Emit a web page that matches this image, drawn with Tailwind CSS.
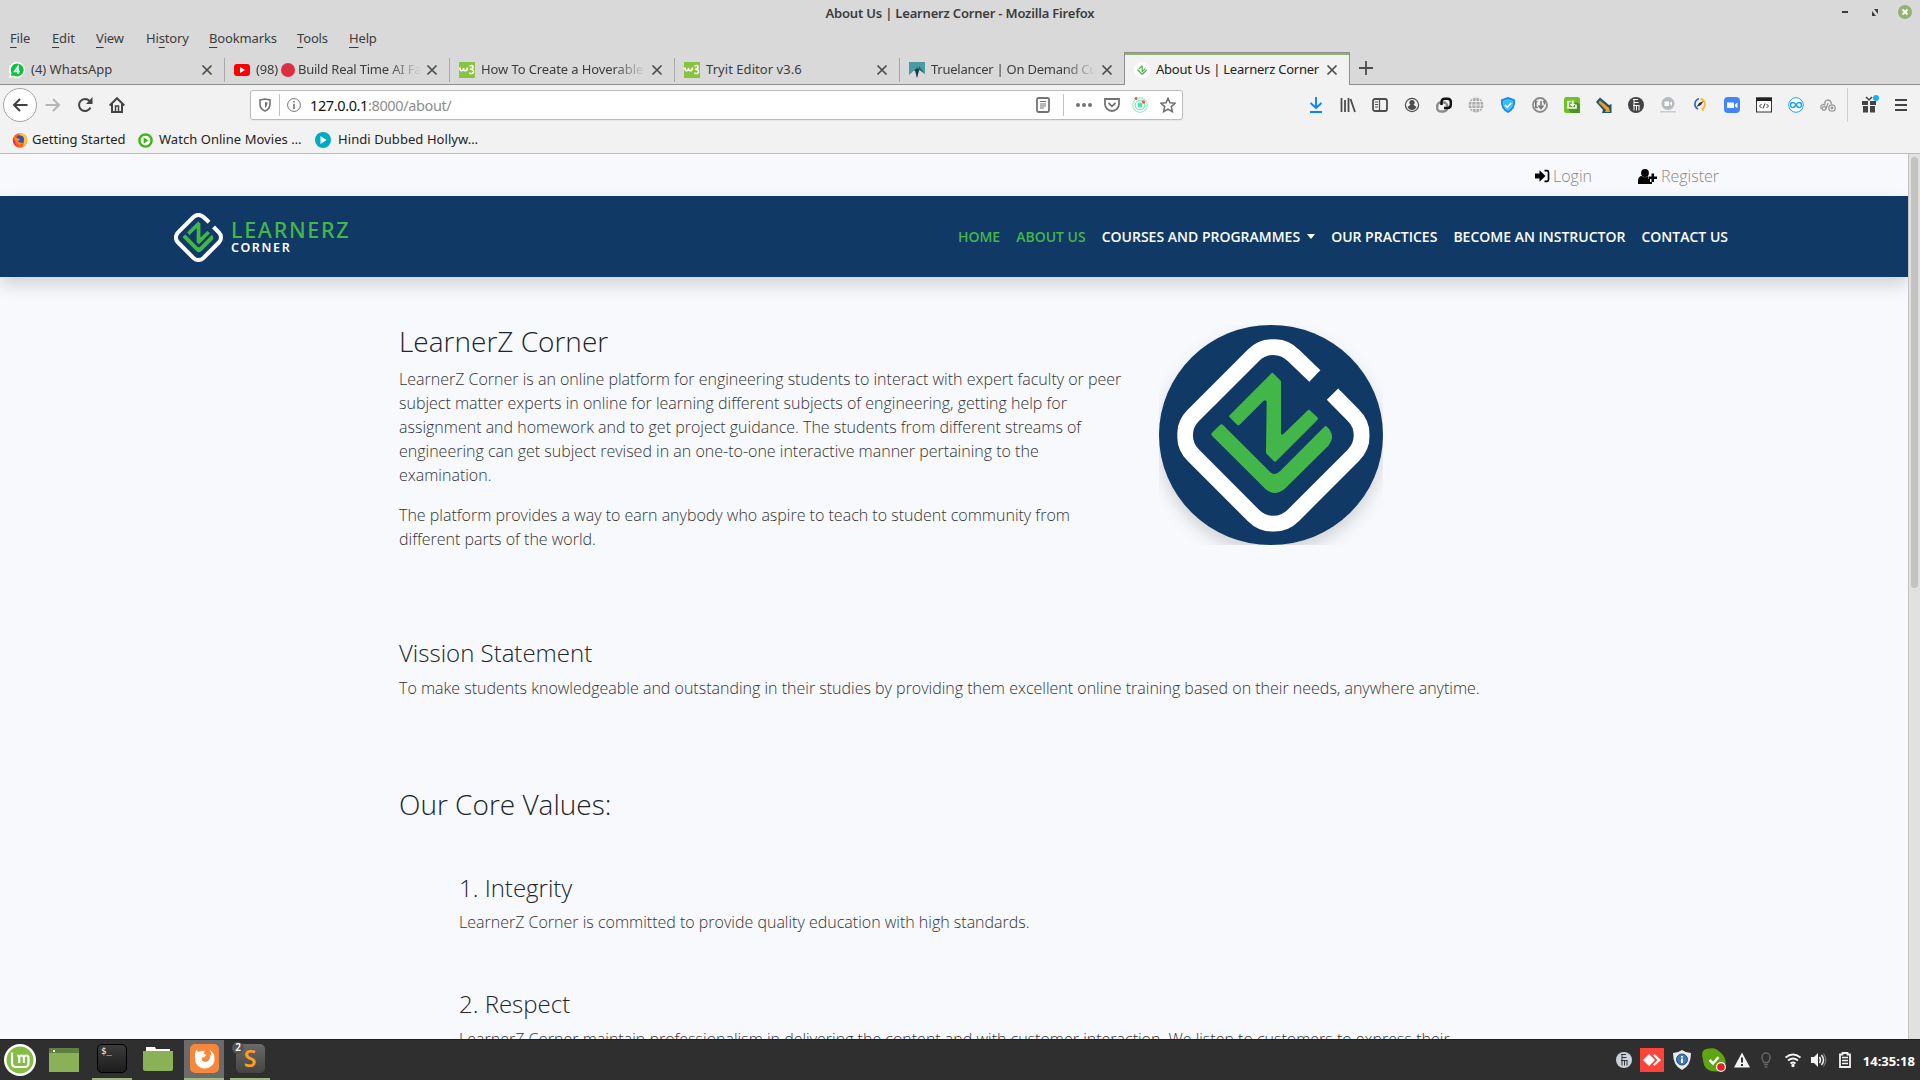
<!DOCTYPE html>
<html lang="en">
<head>
<meta charset="utf-8">
<title>About Us | Learnerz Corner</title>
<script src="https://cdn.jsdelivr.net/npm/@tailwindcss/browser@4"></script>
</head>
<body class="w-[1920px] h-[1080px] overflow-hidden bg-[#d9d9d9]">
<svg class="hidden">
  <symbol id="mark" viewBox="172 118 577 577">
    <path fill="none" stroke="#fff" stroke-width="48" d="M584.5 228L520 166A84 84 0 0 0 400 166L220 346A84 84 0 0 0 220 466L400 646A84 84 0 0 0 520 646L700 466A84 84 0 0 0 700 346L637.5 282.5"/>
    <path fill="#43b649" d="M329 346Q326 349 329 352L351 374Q355 378 359 374L430 303Q438 297 440 306L438 456Q438 460 441 463L461 483Q465 487 469 483L592 360Q596 356 592 352L571 332Q567 327 562 332L491 401Q483 408 483 399V246Q483 243 480 240L461 221Q457 216 453 221Z"/>
    <path fill="#43b649" d="M276 398Q272 402 276 407L437 568Q463 590 493 568L625 437Q643 413 632 395Q627 385 621 380Q617 376 613 380L480 514Q463 530 448 514L309 375Q304 370 300 375Z"/>
  </symbol>
  <symbol id="x" viewBox="0 0 12 12"><path d="M1.5 1.5l9 9M10.5 1.5l-9 9" stroke="#4d4d4d" stroke-width="1.7" fill="none"/></symbol>
  <symbol id="w3" viewBox="0 0 16 16"><path fill="#88c440" d="M0 0h16v16H0z"/><path fill="none" stroke="#fff" stroke-width="1.600" stroke-linejoin="round" d="M.8 5.500Q1 9 2.800 8.800 4.300 8.500 4.500 6.500 4.800 9 6.500 8.800 8.300 8.500 8.500 5.500M10.500 4.200Q14 2.500 14 5q0 2-2.500 2.300Q15 7.500 14.500 10q-.8 2.500-4.300 1"/></symbol>
</svg>

<div class="flex flex-col w-[1920px] h-[1080px] font-['Noto_Sans',sans-serif] text-[13px] text-[#3c3c3c]">
  <!-- Window title -->
  <header class="h-[26px] grid grid-cols-[1fr_auto_1fr] items-center shrink-0 pt-px">
    <span></span>
    <span class="font-semibold tracking-[-0.19px]">About Us | Learnerz Corner - Mozilla Firefox</span>
    <div class="flex justify-end items-center gap-4 pr-2 pb-1">
      <svg class="size-3.5" viewBox="0 0 14 14"><path d="M4 6h6v2H4z" fill="#3c3c3c"/></svg>
      <svg class="size-3.5" viewBox="0 0 14 14"><path d="M6 4h4v5zM4 6l4 5H4z" fill="#3c3c3c"/></svg>
      <svg class="size-3.5" viewBox="0 0 14 14"><circle cx="7" cy="7" r="7" fill="#92b372"/><path d="M4.500 4.500l5 5M9.500 4.500l-5 5" stroke="#fff" stroke-width="1.800"/></svg>
    </div>
  </header>
  <!-- Menu bar -->
  <nav class="h-[26px] shrink-0 flex items-center pl-2.5 tracking-[-0.15px] underline-offset-4">
    <span class="w-[42px]"><u>F</u>ile</span><span class="w-11"><u>E</u>dit</span><span class="w-[50px]"><u>V</u>iew</span><span class="w-[63px]">Hi<u>s</u>tory</span><span class="w-[88px]"><u>B</u>ookmarks</span><span class="w-[52px]"><u>T</u>ools</span><span><u>H</u>elp</span>
  </nav>
  <!-- Tabs -->
  <div class="h-[33px] shrink-0 flex tracking-[-0.1px]">
    <div class="flex items-center grow border-b border-[#8f8f8f] pt-[3px]">
      <div class="w-[225px] h-6 flex items-center border-r border-[#a9a9a9] pl-[9px] pr-[11px]">
        <svg class="size-4 mr-1.5 shrink-0" viewBox="0 0 16 16"><path fill="#fff" d="M8 0a8 8 0 1 1-4 15L0 16l1-4A8 8 0 0 1 8 0"/><path fill="#0dc143" d="M8.200 1.500a6.500 6.500 0 1 1-3.500 12L2 14l.5-3A6.500 6.500 0 0 1 8.200 1.500"/><path d="M9 12V4.500L5.500 9.500H11" stroke="#fff" stroke-width="1.500" fill="none"/></svg>
        <span class="grow tracking-normal">(4) WhatsApp</span><svg class="size-3"><use href="#x"/></svg>
      </div>
      <div class="w-[225px] h-6 flex items-center border-r border-[#a9a9a9] pl-[9px] pr-[11px]">
        <svg class="w-4 h-3 mr-1.5 shrink-0" viewBox="0 0 16 12"><rect width="16" height="12" rx="3" fill="#f00"/><path d="M6 3l5 3-5 3z" fill="#fff"/></svg>
        <span class="w-[166px] flex items-center overflow-hidden whitespace-nowrap mr-[5px] mask-r-from-80% tracking-[-0.2px]"><span>(98)</span><i class="size-[14px] rounded-full bg-[#dd2e44] mx-[3px] shrink-0"></i>Build Real Time AI Face</span><svg class="size-3 shrink-0"><use href="#x"/></svg>
      </div>
      <div class="w-[225px] h-6 flex items-center border-r border-[#a9a9a9] pl-[9px] pr-[11px]">
        <svg class="size-4 mr-1.5 shrink-0"><use href="#w3"/></svg>
        <span class="w-[166px] overflow-hidden whitespace-nowrap mr-[5px] mask-r-from-80%">How To Create a Hoverable</span><svg class="size-3 shrink-0"><use href="#x"/></svg>
      </div>
      <div class="w-[225px] h-6 flex items-center border-r border-[#a9a9a9] pl-[9px] pr-[11px]">
        <svg class="size-4 mr-1.5 shrink-0"><use href="#w3"/></svg>
        <span class="grow tracking-[0.05px]">Tryit Editor v3.6</span><svg class="size-3"><use href="#x"/></svg>
      </div>
      <div class="w-[224px] h-6 flex items-center pl-[9px] pr-[11px]">
        <svg class="size-4 mr-1.5 shrink-0" viewBox="0 0 16 16"><path fill="#4b9ba2" d="M0 0h16v12l-4-3-2-1-2 8-2-8-2 1-4 4z"/><path fill="#2b6066" d="M0 13L10 4l-4 5-2 0zM16 12L10 4l0 4 2 1z"/><path fill="#163b43" d="M6 8l3-2 1 2-2 8z"/></svg>
        <span class="w-[166px] overflow-hidden whitespace-nowrap mr-[5px] mask-r-from-80% tracking-[-0.25px]">Truelancer | On Demand Curated</span><svg class="size-3 shrink-0"><use href="#x"/></svg>
      </div>
    </div>
    <div class="w-[226px] border border-b-0 border-[#8f8f8f] bg-[#f2f2f2] text-[#222]">
      <div class="h-0.5 bg-[#8fb36a]"></div>
      <div class="flex items-center h-[31px] pl-[9px] pr-[11px] pb-px">
        <span class="size-4 rounded-full bg-white mr-1.5 shrink-0 flex items-center justify-center"><svg class="size-2.5" viewBox="270 215 370 370"><use href="#mark" x="172" y="118" width="577" height="577"/></svg></span>
        <span class="grow whitespace-nowrap tracking-[-0.24px]">About Us | Learnerz Corner</span><svg class="size-3 shrink-0"><use href="#x"/></svg>
      </div>
    </div>
    <div class="w-[570px] border-b border-[#8f8f8f] pl-[9px] pt-[9px]"><svg class="size-3.5" viewBox="0 0 14 14"><path d="M7 0v14M0 7h14" stroke="#4d4d4d" stroke-width="1.800"/></svg></div>
  </div>
  <!-- Navigation toolbar and bookmarks -->
  <div class="h-[69px] shrink-0 bg-[#f2f2f2] border-b border-[#bcbcbc]">
    <div class="h-10 flex items-center">
      <div class="w-[250px] flex items-center pl-[3px] gap-[15px]">
        <span class="size-[34px] rounded-full border border-[#a6a6a6] bg-white flex items-center justify-center"><svg class="size-4" viewBox="0 0 16 16"><path d="M15.500 8H2M8 2L2 8l6 6" fill="none" stroke="#3f3f3f" stroke-width="2"/></svg></span>
        <svg class="size-4 -ml-[7px]" viewBox="0 0 16 16"><path d="M.5 8H14M8 2l6 6-6 6" fill="none" stroke="#b5b5b5" stroke-width="2"/></svg>
        <svg class="size-4 ml-px" viewBox="0 0 16 16"><path d="M13.500 10.500A6 6 0 1 1 12.500 4" fill="none" stroke="#444" stroke-width="2"/><path d="M15.500 0v7H9z" fill="#444"/></svg>
        <svg class="size-4 ml-px" viewBox="0 0 16 16"><path d="M.7 8.500L8 1.200l7.300 7.300M3 7v8h10V7" fill="none" stroke="#444" stroke-width="2"/><path d="M6.500 14V9h3v5" fill="none" stroke="#444" stroke-width="1.500"/></svg>
      </div>
      <div class="w-[933px] h-[30px] bg-white border border-[#bcbcbc] rounded-[3px] flex items-center pl-[7px] pr-1.5 shadow-xs">
        <svg class="size-3.5" viewBox="0 0 14 14"><path d="M2 2l5-1 5 1v4q0 5-5 7-5-2-5-7z" fill="none" stroke="#737373" stroke-width="1.600"/><path d="M7 4v6q2.500-1.500 2.500-4.500V4.500z" fill="#737373"/></svg>
        <i class="w-px h-[22px] bg-[#c2c2c2] mx-[7px]"></i>
        <svg class="size-3.5" viewBox="0 0 14 14"><circle cx="7" cy="7" r="6.400" fill="none" stroke="#737373"/><path d="M6.200 3h1.600v1.500H6.200zM6.200 5.800h1.600V11H6.200z" fill="#737373"/></svg>
        <span class="pl-[9px] pt-0.5 grow text-[14.500px] tracking-[-0.38px] text-[#8e8e8e]"><b class="font-normal text-[#111]">127.0.0.1</b>:8000/about/</span>
        <svg class="w-3.5 h-4 mr-[13px]" viewBox="0 0 14 16"><rect x="1" y="1" width="12" height="14" rx="1.500" fill="none" stroke="#737373" stroke-width="1.800"/><path d="M4 4.500h6M4 7h6M4 9h6M4 11h4" stroke="#737373"/></svg>
        <i class="w-px h-[22px] bg-[#c2c2c2]"></i>
        <svg class="size-4 ml-3" viewBox="0 0 16 16" fill="#737373"><circle cx="2" cy="8" r="2"/><circle cx="8" cy="8" r="2"/><circle cx="14" cy="8" r="2"/></svg>
        <svg class="size-4 ml-3" viewBox="0 0 16 16"><path d="M1 2h14v5a7 7 0 0 1-14 0z" fill="none" stroke="#737373" stroke-width="1.800"/><path d="M4.500 6L8 9.300 11.500 6" fill="none" stroke="#737373" stroke-width="1.800"/></svg>
        <svg class="size-4 ml-3" viewBox="0 0 16 16" fill="none"><circle cx="8" cy="8" r="7.300" stroke="#7df0ab"/><circle cx="8" cy="8" r="4.800" stroke="#5ee8ce"/><circle cx="8" cy="8" r="2.500" fill="#43e8a0"/><circle cx="4" cy="1.500" r="1.500" fill="#f5593d"/><circle cx="11.500" cy="5" r="1.700" fill="#f5593d"/></svg>
        <svg class="size-4 ml-3" viewBox="0 0 16 16"><path d="M8 1.300l2 4.500 5 .5-3.700 3.300 1 5L8 12.200l-4.300 2.400 1-5L1 6.300l5-.5z" fill="none" stroke="#737373" stroke-width="1.600"/></svg>
      </div>
      <div class="flex items-center gap-4 pl-[125px] h-full [&>svg]:size-4 [&>svg]:shrink-0">
        <svg viewBox="0 0 16 16"><path d="M8 0v11M2.500 6L8 11l5.500-5M2 15h12" fill="none" stroke="#0a84ff" stroke-width="1.900"/></svg>
        <svg viewBox="0 0 16 16"><path d="M1.500 1v14M5 3v12M8.500 1v14M10.500 2l4.500 13" fill="none" stroke="#4d4d4d" stroke-width="1.800"/></svg>
        <svg viewBox="0 0 16 16"><rect x="1" y="2" width="14" height="12" rx="2" fill="none" stroke="#4d4d4d" stroke-width="1.800"/><path d="M7.500 2v12M3 5h3M3 7.500h3M3 10h3" stroke="#4d4d4d" stroke-width="1.200"/></svg>
        <svg viewBox="0 0 16 16"><circle cx="8" cy="8" r="6.600" fill="none" stroke="#4d4d4d" stroke-width="1.200"/><path d="M8 3a2.600 2.600 0 0 1 1.500 4.800L12.500 10q-1.500 3-4.500 3t-4.500-3l3-2.200A2.600 2.600 0 0 1 8 3" fill="#4d4d4d"/></svg>
        <svg viewBox="0 0 16 16" fill="none" stroke-width="2.400"><rect x="1.200" y="5.500" width="10" height="9" rx="3.500" stroke="#8b8b8b"/><path d="M5.500 8V5.500Q5.500 1.700 9 1.700h2.500q3.300 0 3.300 3.300v2.500q0 3.500-3.300 3.500H8" stroke="#111"/></svg>
        <svg viewBox="0 0 16 16"><circle cx="8" cy="8" r="7.500" fill="#aaa"/><path d="M8 0v16M0 8h16M1 4.500h14M1 11.500h14M5 1q-3 7 0 14M11 1q3 7 0 14" stroke="#f2f2f2" fill="none" stroke-width=".9"/></svg>
        <svg viewBox="0 0 16 16"><path d="M8 0l7 2.500Q16 12 8 16 0 12 1 2.500z" fill="#0d8bf9"/><path d="M8 2.500l4.800 1.700Q13 11 8 13.500 3 11 3.200 4.200z" fill="#39bdfb" stroke="#8fdcff" stroke-width=".6"/><path d="M5 8l2.200 2.300L11.300 6" stroke="#fff" stroke-width="1.500" fill="none"/></svg>
        <svg viewBox="0 0 16 16"><circle cx="8" cy="8" r="7" fill="none" stroke="#8b8b8b" stroke-width="1.800"/><path d="M5.500 4.500H3.800v6h2M9 4v7.500M6.500 8.500L9 11.500l2.500-3M11 4.500h1.500v3" stroke="#777" stroke-width="1.600" fill="none"/></svg>
        <svg viewBox="0 0 16 16"><rect width="16" height="16" rx="2.500" fill="#6fc127"/><path d="M16 7v9H7l-3-4 8-7z" fill="#4f941c"/><path d="M6.500 4.500H4v6.500h8V7.500" stroke="#fff" stroke-width="1.500" fill="none"/><path d="M7.800 3.500h1.800V7h2L8.700 10 5.800 7h2z" fill="#fff"/></svg>
        <svg viewBox="0 0 16 16"><path d="M0 5l4-4.500L13 8l2.500-1V16H6l1-3z" fill="#1e5473"/><path d="M2.500 5.500l1.500-2 9 7.500 1 4H9l1-2z" fill="#f39b1f"/></svg>
        <svg viewBox="0 0 16 16"><circle cx="8" cy="8" r="8" fill="#444"/><path d="M5 2.500h5M6 2.500v11M6 5.500h4.500M5 8.500h6.500M8.500 8.500v5M11 8.500v5" stroke="#fff" fill="none"/></svg>
        <svg viewBox="0 0 16 16"><circle cx="8" cy="6.500" r="6.500" fill="#b5b9c1"/><path d="M4.500 4.500h4.500v4.500H4.500zM9.500 6.500l2.500-2v4.500z" fill="#fff"/><path d="M0 14h16v1.500H0z" fill="#ccc"/></svg>
        <svg viewBox="0 0 16 16" fill="none"><path d="M7 1.800A5.500 5.500 0 0 0 6 12" stroke="#2a66d9" stroke-width="1.700"/><path d="M8.500 1.800a5.500 5.500 0 0 1 2 10L11.500 14" stroke="#fcb827" stroke-width="1.700"/><path d="M4.500 10l2.500-4 4.500-2-2.500 4z" fill="#333"/></svg>
        <svg viewBox="0 0 16 16"><rect width="16" height="16" rx="4" fill="#4285f8"/><path d="M3 5.500h6q1 0 1 1V11H4q-1 0-1-1zM11 7.500L13.500 5.500v5.500L11 9.500z" fill="#fff"/></svg>
        <svg viewBox="0 0 16 16"><rect x=".5" y="1" width="15" height="14" fill="#fff" stroke="#333"/><path d="M0 .5h16V4H0z" fill="#222"/><path d="M5.500 7L3.500 9l2 2M10.500 7l2 2-2 2M9 6.500l-2 5" stroke="#333" fill="none"/></svg>
        <svg viewBox="0 0 16 16" fill="none" stroke="#1da5e8"><circle cx="8" cy="8" r="7.300" fill="#fff"/><path d="M8 8Q6.500 5.500 5 5.500a2.500 2.500 0 0 0 0 5Q6.500 10.500 8 8t3-2.500a2.500 2.500 0 0 1 0 5Q9.500 10.500 8 8" stroke-width="1.500"/></svg>
        <svg viewBox="0 0 16 16" fill="none" stroke="#999" stroke-width="1.300"><path d="M1.500 12Q-.5 8.500 3 7.500q1.500 0 2 1M5 7.500Q4 4 7.500 3q3.500 0 4 4.500M6 12l2-6"/><circle cx="4" cy="11.500" r="1.800"/><circle cx="12" cy="11" r="3.200"/><circle cx="12" cy="11" r=".8"/></svg>
        <i class="w-px h-[34px] bg-[#cfcfcf] -ml-[5px] -mr-[3px]"></i>
        <svg class="overflow-visible" viewBox="0 0 16 16" fill="#444"><path d="M1 4h6v4H1zM9 4h6v4H9zM2 9h5v6.500H2zM9 9h5v6.500H9z"/><path d="M5 0l3 3 3-3" fill="none" stroke="#444" stroke-width="1.500"/><circle cx="15" cy="1" r="3" fill="#11b1f6"/></svg>
        <svg viewBox="0 0 16 16"><path d="M2 3h12M2 8h12M2 13h12" stroke="#444" stroke-width="2"/></svg>
      </div>
    </div>
    <div class="h-7 flex items-center pl-3 pt-0.5 text-[#222]">
      <svg class="size-4 mr-1" viewBox="0 0 16 16"><circle cx="8" cy="8.500" r="7.300" fill="#ff5a28"/><path d="M7 2q6-2 8 4 1 7-5 9 4-5 0-8z" fill="#ffc52b"/><path d="M1 6q0 8 6 9-4-2-4-6z" fill="#e0207a"/><circle cx="8" cy="7.500" r="4" fill="#2c4fc2"/><path d="M2 4l3 2 3 1-2 3 5 1q-3 3-6 0T2 4" fill="#ff8a19"/></svg>
      <span class="w-[106px] whitespace-nowrap">Getting Started</span>
      <svg class="size-[15px] mr-1.5" viewBox="0 0 16 16"><circle cx="8" cy="8" r="6.500" fill="#fff" stroke="#3fb618" stroke-width="2.600"/><path d="M6 4.500l5 3.500-5 3.500z" fill="#3fb618"/></svg>
      <span class="w-[156px] whitespace-nowrap tracking-[0.04px]">Watch Online Movies …</span>
      <svg class="size-4 mr-[7px]" viewBox="0 0 16 16"><circle cx="8" cy="8" r="8" fill="#00aac1"/><path d="M5.500 4l6 4-6 4z" fill="#fff"/></svg>
      <span class="tracking-[0.07px]">Hindi Dubbed Hollyw…</span>
    </div>
  </div>

  <!-- Page viewport -->
  <div class="h-[885px] shrink-0 flex">
    <main class="w-[1908px] h-full overflow-hidden bg-[#f8f9fc] font-['Open_Sans',sans-serif] text-base font-light text-[#333]">
      <div class="h-[42px] flex items-center justify-end pt-0.5 pr-[189px] text-[#888]">
        <svg class="w-[15px] h-[14px] mr-[3px]" viewBox="0 0 15 14"><path d="M0 4.500h4.500V1.200L10.500 7l-6 5.800V9.500H0z" fill="#000"/><path d="M9.500 1.700H12q1.500 0 1.500 1.500v7.600q0 1.500-1.500 1.500H9.500" fill="none" stroke="#000" stroke-width="1.700"/></svg>
        <span>Login</span>
        <svg class="w-[19px] h-[15px] ml-[46px] mr-1" viewBox="0 0 19 15"><circle cx="7" cy="4" r="3.900" fill="#000"/><path d="M0 15v-2.500Q0 7 4 7q3 2.500 6 0v3h2v3h2v2zM13.500 4.500H16v3h3V10h-3v3h-2.500v-3h-3V7.500h3z" fill="#000"/></svg>
        <span>Register</span>
      </div>
      <div class="relative h-[81px] bg-[#103a65] shadow-[0_8px_16px_rgba(0,0,0,0.15)] flex items-center justify-between pl-[174px] pr-[180px]">
        <div class="flex items-center gap-2 pt-px">
          <svg class="size-[49px]"><use href="#mark"/></svg>
          <div class="flex flex-col font-['Noto_Sans',sans-serif]">
            <span class="text-[21.500px] leading-[22px] font-medium text-[#43b649] tracking-[1.700px]">LEARNERZ</span>
            <span class="text-[12.500px] leading-[14px] font-semibold text-white tracking-[1.650px]">CORNER</span>
          </div>
        </div>
        <nav class="flex items-center gap-4 text-sm font-semibold text-white whitespace-nowrap">
          <span class="text-[#43b649]">HOME</span><span class="text-[#43b649]">ABOUT US</span>
          <span class="flex items-center gap-[7px]">COURSES AND PROGRAMMES <i class="border-x-4 border-t-[5px] border-x-transparent border-t-white"></i></span>
          <span>OUR PRACTICES</span><span>BECOME AN INSTRUCTOR</span><span>CONTACT US</span>
        </nav>
      </div>
      <div class="pl-[399px] pt-12">
        <section class="flex gap-9 h-[314px]">
          <div class="w-[724px]">
            <h2 class="text-[28px] leading-8 mb-2.5 text-[#212529]">LearnerZ Corner</h2>
            <p class="mb-4">LearnerZ Corner is an online platform for engineering students to interact with expert faculty or peer<br>subject matter experts in online for learning different subjects of engineering, getting help for<br>assignment and homework and to get project guidance. The students from different streams of<br>engineering can get subject revised in an one-to-one interactive manner pertaining to the<br>examination.</p>
            <p>The platform provides a way to earn anybody who aspire to teach to student community from<br>different parts of the world.</p>
          </div>
          <svg class="w-[224px] h-[220px]" viewBox="117 75 672 660">
            <ellipse cx="453" cy="405" rx="336" ry="330" fill="#103a65" class="drop-shadow-[0_24px_24px_rgba(0,0,0,0.15)]"/>
            <use href="#mark" x="172" y="118" width="577" height="577"/>
          </svg>
        </section>
        <section class="h-[149px]">
          <h3 class="text-2xl leading-[27px] mb-2.5 text-[#212529]">Vission Statement</h3>
          <p>To make students knowledgeable and outstanding in their studies by providing them excellent online training based on their needs, anywhere anytime.</p>
        </section>
        <h2 class="text-[28px] leading-8 h-[85px] text-[#212529]">Our Core Values:</h2>
        <section class="pl-[60px] h-[116px]">
          <h3 class="text-2xl leading-[29px] mb-2 text-[#212529]">1. Integrity</h3>
          <p>LearnerZ Corner is committed to provide quality education with high standards.</p>
        </section>
        <section class="pl-[60px]">
          <h3 class="text-2xl leading-[29px] mb-[9px] text-[#212529]">2. Respect</h3>
          <p>LearnerZ Corner maintain professionalism in delivering the content and with customer interaction. We listen to customers to express their</p>
        </section>
      </div>
    </main>
    <div class="w-3 bg-[#e1e1df] border-l border-[#c4c4c4] pt-[3px] pl-0.5"><div class="w-[7px] h-[431px] rounded-full bg-[#c3c3c1]"></div></div>
  </div>

  <!-- Desktop panel -->
  <footer class="h-[41px] shrink-0 bg-[#2f2f2f] border-t border-[#1e1e1e] flex justify-between">
    <div class="flex h-full">
      <div class="w-10 flex items-center justify-center"><svg class="size-8" viewBox="0 0 32 32"><circle cx="16" cy="16" r="16" fill="#fff"/><circle cx="16" cy="16" r="13.500" fill="#86be43"/><path d="M8 8.500v10.500q0 4 4 4h8.500q4 0 4-4v-5q0-2.500-2.300-2.500t-2.300 2.500v5M19.900 14q0-2.500-2.300-2.500t-2.300 2.500v5M15.300 14q0-2.500-2.200-2.500" fill="none" stroke="#fff" stroke-width="2.200"/></svg></div>
      <div class="w-12 flex items-center justify-center"><svg class="w-[30px] h-6" viewBox="0 0 30 24"><path d="M0 0h30v24H0z" fill="#8bb158"/><path d="M0 0h30v5H0z" fill="#5f8040"/><path d="M4 2h2v2H4z" fill="#fff"/></svg></div>
      <div class="ml-1 w-10 border-b-2 border-[#9bb97c] flex justify-center pt-1"><div class="w-[30px] h-[29px] rounded-[5px] bg-linear-to-b from-[#3c3c3c] to-[#1d1d1d] border border-black text-white font-['DejaVu_Sans_Mono',monospace] text-[9px] leading-3 pl-[3px]">$_</div></div>
      <div class="w-[52px] pl-[11px] pt-[7px]"><svg class="w-[30px] h-6" viewBox="0 0 30 24"><path d="M3 0h9l1 2h14v4H3z" fill="#fff"/><path d="M0 4h30v18q0 2-2 2H2q-2 0-2-2z" fill="#8bb158"/></svg></div>
      <div class="w-10 bg-[#6b6b6b] border-b-2 border-[#9bb97c] flex justify-center pt-1"><svg class="w-[29px] h-[29px]" viewBox="0 0 29 29"><rect width="29" height="29" rx="5" fill="#f78739"/><path d="M6.500 5.500l1.800 2.500Q12 6 15 7l-1.500 2.500 3 1.500-2.500 2.500h-2.500l.5 3q3 2.500 6 .5 3-2.500 1.500-6.500l2 1.500q0-3.500-2-6.500 5 3.500 5 9A9.600 9.600 0 0 1 14.500 24.500 9.600 9.600 0 0 1 5 15Q4.500 9 6.500 5.500" fill="#fff"/></svg></div>
      <div class="relative ml-1.5 w-10 border-b-2 border-[#9bb97c] flex justify-center pt-1">
        <div class="w-[29px] h-[29px] rounded-[5px] bg-linear-to-b from-[#6a6a6a] to-[#444] text-[#fba01f] text-[23px] leading-[28px] font-semibold text-center">S</div>
        <span class="absolute left-0.5 top-0.5 size-3 rounded-full bg-[#555] text-white text-[10px] leading-[11px] font-semibold text-center">2</span>
      </div>
    </div>
    <div class="flex items-center pr-[5px] text-white [&>svg]:shrink-0">
      <svg class="size-4 mr-2" viewBox="0 0 16 16"><circle cx="8" cy="8" r="8" fill="#cbd2de"/><path d="M5 2.500h5M6 2.500v11M6 5.500h4.500M5 8.500h6.500M8.500 8.500v5M11 8.500v5" stroke="#333" fill="none"/></svg>
      <svg class="size-6 mr-[9px]" viewBox="0 0 24 24"><path d="M0 0h24v24H0z" fill="#fe4439"/><path d="M9 6l6 6-6 6-6-6zM13 7.500L14.500 6 21 12l-6.500 6-1.500-1.500L17.500 12z" fill="#fff"/></svg>
      <svg class="w-[18px] h-5 mr-[11px]" viewBox="0 0 18 20"><path d="M9 0q4 3 9 3 0 13-9 17Q0 16 0 3q5 0 9-3" fill="#e8ece9"/><circle cx="9" cy="9.500" r="5.500" fill="#3e78bd" stroke="#24507f"/><path d="M8 6h2v1.500H8zM8 8.500h2V13H8z" fill="#fff"/></svg>
      <svg class="size-6 mr-2" viewBox="0 0 24 24"><path d="M0 7Q0 0 8 .5 13-1 18 4q5 4 5.500 9 1 10-9 10.500Q5 24 2 17 1 12 0 7" fill="#5fa512"/><path d="M7.500 12l3.500 3.500L16.500 9" stroke="#fff" stroke-width="2.500" fill="none"/><circle cx="19" cy="19" r="5" fill="#fff"/><circle cx="19" cy="19" r="3.800" fill="#ec1c24"/></svg>
      <svg class="size-4 mr-[11px]" viewBox="0 0 16 16"><path d="M8 .5L16 15.500H0z" fill="#f2f2f2"/><path d="M7 5.500h2v5H7zM7 12h2v2H7z" fill="#2f2f2f"/></svg>
      <svg class="w-2.5 h-4 mr-3.5" viewBox="0 0 10 16"><path d="M3 10.500Q1 8 1 5a4 4 0 0 1 8 0Q9 8 7 10.500z" fill="none" stroke="#666" stroke-width="1.500"/><path d="M3 12.500h4M3.500 15h3" stroke="#666" stroke-width="1.500"/></svg>
      <svg class="size-4 mr-2.5" viewBox="0 0 16 16" fill="none" stroke="#f2f2f2" stroke-width="1.800"><path d="M.5 5.500q7.500-6 15 0M3 8.500q5-4 10 0M5.500 11.500q2.500-2 5 0"/><circle cx="8" cy="13.500" r=".8" fill="#f2f2f2"/></svg>
      <svg class="size-4 mr-3" viewBox="0 0 16 16"><path d="M0 5h3l4-4v14l-4-4H0z" fill="#f2f2f2"/><path d="M8.500 5q2 3 0 6M10.500 3q4 5 0 10" fill="none" stroke="#f2f2f2" stroke-width="1.500"/><path d="M12.500 1.500q4.500 6.500 0 13" fill="none" stroke="#777" stroke-width="1.300"/></svg>
      <svg class="w-3 h-4 mr-3" viewBox="0 0 12 16"><path d="M1 2.500h2.500V1h5v1.500H11V15H1z" fill="none" stroke="#f2f2f2" stroke-width="1.800"/><path d="M3 5.500h6M3 8.500h6M3 11.500h6" stroke="#f2f2f2" stroke-width="1.600"/></svg>
      <span class="font-bold pt-[3px] tracking-[0.05px]">14:35:18</span>
    </div>
  </footer>
</div>
</body>
</html>
